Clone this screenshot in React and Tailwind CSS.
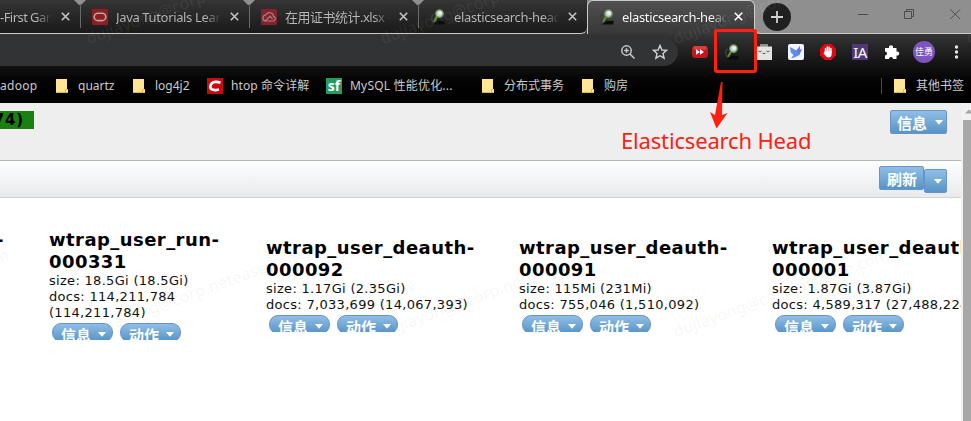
import React from "react";

const UI = "font-['Noto_Sans','Noto_Sans_CJK_SC',sans-serif]";

function CloseX({ bright }) {
  return (
    <svg className="h-[9px] w-[9px] shrink-0" viewBox="0 0 9 9">
      <path d="M0.800 0.800L8.200 8.200M8.200 0.800L0.800 8.200" stroke={bright ? "#fff" : "#c4c4c4"} strokeWidth="1.6" fill="none" />
    </svg>
  );
}

function Magnifier() {
  return (
    <svg className="h-4 w-4 shrink-0" viewBox="0 0 16 16">
      <path d="M4 5.500Q1.500 5.500 1.800 9T4 13.500" stroke="#3d3d3d" strokeWidth="1.5" fill="none" />
      <path d="M3 15.500L8 11.500L12 12L14.500 11.500V15.500Z" fill="#0b0b0b" />
      <path d="M7 7.500L4.500 12" stroke="#5b8b35" strokeWidth="2.2" strokeLinecap="round" />
      <circle cx="9.500" cy="4.600" r="3.800" fill="#b9d0c8" stroke="#6b8f4e" strokeWidth="1.2" />
      <circle cx="10" cy="4" r="2" fill="#e6f0f5" />
    </svg>
  );
}

function OracleIcon() {
  return (
    <svg className="h-4 w-4 shrink-0" viewBox="0 0 16 16">
      <rect width="16" height="16" rx="1" fill="#901d22" />
      <rect x="2.2" y="4.2" width="11.6" height="7.4" rx="3.7" fill="none" stroke="#b7a6a6" strokeWidth="1.6" />
    </svg>
  );
}

function CloudIcon() {
  return (
    <svg className="h-4 w-4 shrink-0" viewBox="0 0 16 16">
      <rect width="16" height="16" rx="1.5" fill="#84222e" />
      <path d="M4 12H12.2A2.4 2.4 0 0 0 12.5 7.3A4 4 0 0 0 5 5.8A3.2 3.2 0 0 0 4 12L9 7.3L11.5 9.7" fill="none" stroke="#ad7f85" strokeWidth="1.2" />
    </svg>
  );
}

function Tab({ icon, label, spacing }) {
  return (
    <div className="relative flex h-[33px] w-[169px] shrink-0 items-center pl-[12px]">
      {icon}
      <div className={"ml-[8px] w-[105px] shrink-0 overflow-hidden whitespace-nowrap bg-linear-to-r from-[#b8b8b8] from-85% to-[#2a2a2a] bg-clip-text text-[13px] leading-[18px] text-transparent " + spacing}>
        {label}
      </div>
      <div className="ml-[9px]"><CloseX /></div>
    </div>
  );
}

function Separator({ className }) {
  return (
    <svg className={"absolute top-0 h-[28px] w-[12px] " + className} viewBox="0 0 12 28">
      <path d="M0 0H12L7 5H5Z" fill="#909090" />
      <path d="M6.5 4V28" stroke="#696969" />
    </svg>
  );
}

function Folder() {
  return (
    <svg className="h-[14px] w-3 shrink-0" viewBox="0 0 12 14">
      <path d="M0 0H11V10H12V14H0Z" fill="#ffe594" />
      <path d="M0 13.5H12M9.5 13V10.5H11.5" stroke="#dfb93e" fill="none" />
    </svg>
  );
}

function Bookmark({ icon, label, width, spacing }) {
  return (
    <div className={"flex shrink-0 items-center " + width}>
      {icon}
      <span className={"whitespace-nowrap text-[12px] leading-4 text-[#cbcbcb] " + spacing}>{label}</span>
    </div>
  );
}

function TopTabs() {
  return (
    <div className="relative flex h-[34px] bg-[#8f8f8f]">
      <div className="absolute bottom-0 left-[575px] h-[12px] w-[24px] bg-[#373737]" />
      <div className="relative flex h-[34px] w-[587px] overflow-hidden rounded-br-[6px] border-b border-[#c9cbc9] bg-linear-to-b from-[#353535] to-[#1a1a1a]">
        <div className="flex w-[80px] shrink-0 items-center">
          <div className="w-[52px] overflow-hidden whitespace-nowrap bg-linear-to-r from-[#b8b8b8] from-70% to-[#2a2a2a] bg-clip-text text-[13px] leading-[18px] tracking-[-0.55px] text-transparent">-First Garbage</div>
          <div className="ml-[9px]"><CloseX /></div>
        </div>
        <Tab icon={<OracleIcon />} label="Java Tutorials Learn" spacing="tracking-[-0.35px]" />
        <Tab icon={<CloudIcon />} label="在用证书统计.xlsx - " spacing="tracking-[-0.5px]" />
        <Tab icon={<Magnifier />} label="elasticsearch-head" spacing="tracking-[-0.35px]" />
        <Separator className="left-[74px]" />
        <Separator className="left-[243px]" />
        <Separator className="left-[412px]" />
      </div>
      <div className="relative flex h-[34px] w-[168px] items-center rounded-t-[6px] border-t border-r border-l border-[#c9cbc9] bg-linear-to-b from-[#515151] to-[#373737] pb-[2px] pl-[11px]">
        <Magnifier />
        <div className="ml-[7px] w-[105px] shrink-0 overflow-hidden whitespace-nowrap bg-linear-to-r from-white from-85% to-[#454545] bg-clip-text text-[13px] leading-[18px] tracking-[-0.35px] text-transparent">elasticsearch-head</div>
        <div className="ml-[7px]"><CloseX bright /></div>
      </div>
      <div className="flex h-[34px] flex-1 items-start rounded-bl-[6px] border-b border-[#c9cbc9] pt-[3px] pl-[8px]">
        <svg className="h-[28px] w-[28px]" viewBox="0 0 28 28">
          <circle cx="14" cy="14" r="14" fill="#202020" />
          <path d="M14 8V20M8 14H20" stroke="#d0d0d0" strokeWidth="1.8" />
        </svg>
        <svg className="ml-[66px] h-[12px] w-[104px] translate-y-[5px]" viewBox="0 0 104 12" fill="none" stroke="#4c4c4c">
          <path d="M1 6.5H11M93.500 1.500L103 11M103 1.500L93.500 11" />
          <path d="M47.500 3.500H54.500V10.500H47.500ZM49.500 3.500V1.500H56.500V8.500H54.500" />
        </svg>
      </div>
    </div>
  );
}

function Toolbar() {
  return (
    <div className="flex h-[36px] items-center">
      <div className="flex h-[28px] w-[678px] items-center rounded-r-full bg-[#323334]">
        <svg className="ml-[620px] h-[16px] w-[16px]" viewBox="0 0 16 16" fill="none" stroke="#c9c9c9" strokeWidth="1.5">
          <circle cx="6.500" cy="6.500" r="4.700" />
          <path d="M10 10L14.500 14.500M4.200 6.500H8.800M6.500 4.200V8.800" />
        </svg>
        <svg className="ml-[16px] h-[16px] w-[16px]" viewBox="0 0 16 16" fill="none" stroke="#d2d2d2" strokeWidth="1.4">
          <path d="M8 1.500L9.900 6L14.600 6.400L11 9.500L12.100 14.200L8 11.700L3.900 14.200L5 9.500L1.400 6.400L6.100 6Z" />
        </svg>
      </div>
      <svg className="ml-[14px] h-4 w-4" viewBox="0 0 16 16">
        <rect y="2" width="16" height="12" rx="3.500" fill="#c5161d" />
        <rect x="1" y="2" width="14" height="4" rx="2" fill="#dd3a40" />
        <path d="M4 5.200L8 8L4 10.800ZM8 5.200L12 8L8 10.800Z" fill="#fff" />
      </svg>
      <div className="ml-[16px]"><Magnifier /></div>
      <svg className="ml-[16px] h-4 w-4" viewBox="0 0 16 16">
        <path d="M4 0H12V3H16V16H0V3H4Z" fill="#8e8e8e" />
        <path d="M0 2.500H16V16H0Z" fill="#e4e4e4" />
        <path d="M2.500 7Q4 9 5.500 7M6.500 9Q8 10.500 9.500 9M10.500 7Q12 9 13.500 7" stroke="#555" fill="none" />
      </svg>
      <svg className="ml-[16px] h-4 w-4" viewBox="0 0 16 16">
        <rect width="16" height="16" rx="2" fill="#f1f5ff" />
        <path d="M2 3L8.500 6.500L12 2L11.800 6L14 5L11.500 11L7.500 13L3 14.500L5.500 11L2.800 8.500Z" fill="#5b8df5" />
        <path d="M8.500 6.500L12 2L11.800 6L14 5L11 10Z" fill="#7370df" />
      </svg>
      <svg className="ml-[16px] h-4 w-4" viewBox="0 0 16 16">
        <path d="M4.700 0H11.300L16 4.700V11.300L11.300 16H4.700L0 11.300V4.700Z" fill="#e30613" />
        <path d="M5.500 9V4.500M7.300 8V3M9.100 8V3.200M10.900 8.500V4.500" stroke="#fff" strokeWidth="1.500" strokeLinecap="round" />
        <path d="M4.800 7H11.700V10Q11.500 13.500 8.500 13.500Q6.500 13.500 5.300 11.500L3.300 9L4.500 8.500Z" fill="#fff" />
      </svg>
      <div className="ml-[16px] h-4 w-4 bg-[#4e3a7b] text-center font-['Noto_Sans',sans-serif] text-[15px] leading-[16px] tracking-[-0.5px] text-white">IA</div>
      <svg className="ml-[16px] h-4 w-4" viewBox="0 0 16 16">
        <path d="M1 4H5A2.100 2.100 0 1 1 9 4H12.500V7.500A2.100 2.100 0 1 1 12.500 11.500V15H9A2 2 0 1 0 5 15H1V11.500A2 2 0 1 0 1 7.500Z" fill="#fff" />
      </svg>
      <div className="ml-[13px] flex h-[22px] w-[22px] items-center justify-center rounded-full bg-[#7d55bd] text-[9px] text-white">佳勇</div>
      <svg className="ml-[19px] h-4 w-[5px]" viewBox="0 0 5 16" fill="#e8e8e8">
        <circle cx="2.500" cy="3" r="1.700" /><circle cx="2.500" cy="8" r="1.700" /><circle cx="2.500" cy="13" r="1.700" />
      </svg>
    </div>
  );
}

function Bookmarks() {
  return (
    <div className="flex h-[32px] items-center">
      <Bookmark label="adoop" width="w-[56px]" spacing="tracking-[0.3px]" />
      <Bookmark icon={<Folder />} label="quartz" width="w-[77px]" spacing="ml-[10px]" />
      <Bookmark icon={<Folder />} label="log4j2" width="w-[74px]" spacing="ml-[10px]" />
      <Bookmark
        icon={<svg className="h-4 w-4 shrink-0" viewBox="0 0 16 16"><rect width="16" height="16" fill="#c90a0a" /><path d="M13.500 4.600Q7 2.800 4.600 5.500Q2 9 4.500 11.200Q7 12.800 12 11.500" fill="none" stroke="#fff" strokeWidth="2.700" /></svg>}
        label="htop 命令详解" width="w-[119px]" spacing="ml-[8px] tracking-[0.1px]"
      />
      <Bookmark
        icon={<div className="h-4 w-4 shrink-0 bg-[#259b5f] text-center font-['Open_Sans',sans-serif] text-[14px] leading-[15px] font-bold text-white">sf</div>}
        label="MySQL 性能优化..." width="w-[156px]" spacing="ml-[8px] tracking-[0.2px]"
      />
      <Bookmark icon={<Folder />} label="分布式事务" width="w-[100px]" spacing="ml-[10px]" />
      <Bookmark icon={<Folder />} label="购房" width="w-[299px]" spacing="ml-[10px]" />
      <div className="h-4 w-px shrink-0 bg-[#4d4d4d]" />
      <Bookmark icon={<Folder />} label="其他书签" width="w-[77px] ml-[12px]" spacing="ml-[10px]" />
    </div>
  );
}

const BLUE = "border border-[#6a94c9] bg-linear-to-b from-[#90bfe6] to-[#5794c6] text-[15px] font-bold text-white ";

function Caret() {
  return (
    <svg className="h-[5px] w-[8px] shrink-0" viewBox="0 0 8 5"><path d="M0 0H8L4 4.800Z" fill="#fff" /></svg>
  );
}

function PillButton({ label }) {
  return (
    <div className={"flex h-[19px] w-[61px] shrink-0 items-start rounded-[9px] pl-[8px] " + BLUE}>
      <span className="w-[30px] translate-y-[2px] leading-[18px] whitespace-nowrap">{label}</span>
      <span className="mt-[8px] ml-[7px] flex"><Caret /></span>
    </div>
  );
}

function IndexCard({ name, lines, width, pad }) {
  return (
    <div className={"shrink-0 whitespace-nowrap font-['DejaVu_Sans',sans-serif] " + width + " " + pad}>
      <div className="text-[18px] leading-[22px] font-bold tracking-[0.44px] text-black">
        {name.map((n) => <div key={n}>{n}</div>)}
      </div>
      <div className="text-[13px] leading-[16px] tracking-[0.3px] text-[#111]">
        {lines.map((n) => <div key={n}>{n}</div>)}
      </div>
      <div className={"ml-[3px] mt-[2px] flex h-[17px] gap-[7px] overflow-hidden " + UI}>
        <PillButton label="信息" />
        <PillButton label="动作" />
      </div>
    </div>
  );
}

function Watermark({ className }) {
  return (
    <div className={"pointer-events-none absolute origin-bottom-left rotate-[-20deg] whitespace-nowrap text-[16px] leading-[20px] tracking-[0.2px] " + className}>
      dujiayong@corp.netease.com
    </div>
  );
}

export default function App() {
  return (
    <div className={"relative h-[421px] w-[971px] overflow-hidden bg-white " + UI}>
      <div className="h-[103px] bg-black">
        <TopTabs />
        <div className="h-[69px] bg-linear-to-b from-[#353535] via-[#0c0c0c] via-55% to-black">
          <Toolbar />
          <Bookmarks />
        </div>
      </div>

      <div className="flex h-[318px]">
        <div className="w-[961px] overflow-hidden">
          <div className="flex h-[58px] items-start justify-between border-b border-[#b7b7b7] bg-[#eee] pr-[14px]">
            <div className="mt-[8px] flex h-[18px] w-[34px] justify-end bg-[#1b8012] pr-[10px] font-['DejaVu_Sans',sans-serif] text-[15px] leading-[19px] font-bold tracking-[0.8px] whitespace-nowrap text-black">74)</div>
            <div className={"mt-[7px] flex h-[24px] w-[57px] items-center rounded-[2px] pl-[6px] " + BLUE}>
              <span className="w-[30px] translate-y-[1px] leading-[20px]">信息</span>
              <span className="ml-[8px] flex"><Caret /></span>
            </div>
          </div>
          <div className="flex h-[37px] items-start justify-end border-b border-[#ced4d8] bg-linear-to-b from-[#fdfefe] to-[#e8eaec] pr-[14px]">
            <div className={"mt-[5px] h-[24px] w-[45px] rounded-[2px] pl-[7px] leading-[24px] whitespace-nowrap " + BLUE}>刷新</div>
            <div className={"mt-[8px] flex h-[24px] w-[23px] items-center rounded-[2px] pl-[9px] " + BLUE}><Caret /></div>
          </div>
          <div className="flex items-start">
            <div className="w-[49px] shrink-0 overflow-hidden pt-[31px] font-['DejaVu_Sans',sans-serif] text-[18px] leading-[22px] font-bold"><div className="-ml-[4px]">-</div></div>
            <IndexCard width="w-[217px]" pad="pt-[31px]" name={["wtrap_user_run-", "000331"]} lines={["size: 18.5Gi (18.5Gi)", "docs: 114,211,784", "(114,211,784)"]} />
            <IndexCard width="w-[253px]" pad="pt-[39px]" name={["wtrap_user_deauth-", "000092"]} lines={["size: 1.17Gi (2.35Gi)", "docs: 7,033,699 (14,067,393)"]} />
            <IndexCard width="w-[253px]" pad="pt-[39px]" name={["wtrap_user_deauth-", "000091"]} lines={["size: 115Mi (231Mi)", "docs: 755,046 (1,510,092)"]} />
            <IndexCard width="w-[253px]" pad="pt-[39px]" name={["wtrap_user_deauth-", "000001"]} lines={["size: 1.87Gi (3.87Gi)", "docs: 4,589,317 (27,488,224)"]} />
          </div>
        </div>
        <div className="flex w-[10px] flex-col items-end overflow-hidden bg-[#f1f1f1]">
          <svg className="h-[17px] w-[8px]" viewBox="0 0 8 17"><path d="M2 10.500L6 6.500L8 8.500V10.500Z" fill="#a3a3a3" /></svg>
          <div className="w-[8px] flex-1 bg-[#a8a8a8]" />
        </div>
      </div>

      <Watermark className="top-[28px] left-[90px] text-white/8" />
      <Watermark className="top-[28px] left-[384px] text-white/8" />
      <Watermark className="top-[28px] left-[677px] text-white/8" />
      <Watermark className="top-[28px] left-[970px] text-white/8" />
      <Watermark className="top-[321px] left-[-203px] text-black/5" />
      <Watermark className="top-[321px] left-[90px] text-black/5" />
      <Watermark className="top-[321px] left-[384px] text-black/5" />
      <Watermark className="top-[321px] left-[677px] text-black/5" />

      <div className="absolute top-[29px] left-[714px] h-[44px] w-[43px] rounded-[3px] border-3 border-[#ff2010]" />
      <svg className="absolute top-[80px] left-[708px] h-[50px] w-[22px]" viewBox="0 0 22 50">
        <path d="M13 2H14.500L14 35L19.500 33L8.500 48.500L2 32L7 35Z" fill="#ff2010" />
      </svg>
      <div className="absolute top-[125px] left-[621px] text-[22px] leading-[30px] tracking-[-0.17px] whitespace-nowrap text-[#ff2010]">Elasticsearch Head</div>
    </div>
  );
}
